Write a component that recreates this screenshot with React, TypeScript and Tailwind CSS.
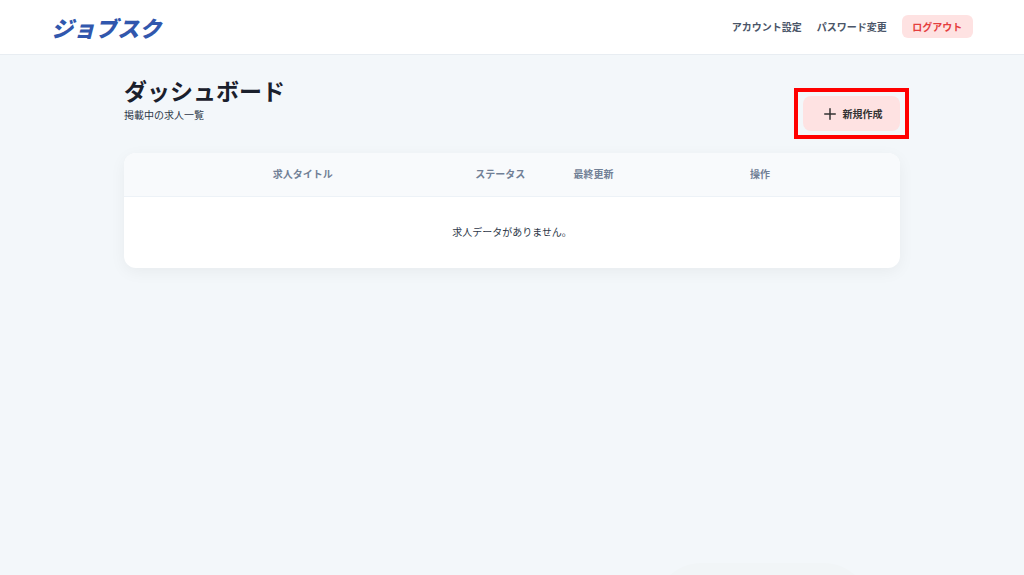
import React from "react";
import { Plus } from "lucide-react";

const Columns = [
  { Name: "求人タイトル", style: "w-[43%] pl-6" },
  { Name: "ステータス", style: "w-[11%]" },
  { Name: "最終更新", style: "w-[13%]" },
  { Name: "操作", style: "w-[33%] pr-6" },
];

const Header = () => {
  return (
    <header className="flex items-center justify-between h-[55px] px-[5%] bg-white border-b border-[#e8edf2]">
      <a
        href="#"
        className="text-[22px] leading-6 font-black italic text-[#3157ad] whitespace-nowrap"
      >
        ジョブスク
      </a>
      <nav className="flex items-center gap-[15px] pb-px text-[10px] leading-4 font-bold text-[#4a5568]">
        <a href="#">アカウント設定</a>
        <a href="#">パスワード変更</a>
        <button className="h-[23px] w-[71px] rounded-md bg-[#fee2e2] text-[#e53e3e] cursor-pointer">
          ログアウト
        </button>
      </nav>
    </header>
  );
};

const App = () => {
  return (
    <div
      className={`relative min-h-screen overflow-hidden bg-[#f3f7fa] font-["Noto_Sans_CJK_JP",sans-serif] text-[#2d3748]`}
    >
      <Header />
      <main className="relative mx-auto w-full max-w-[776px] pt-5">
        <div className="flex items-end justify-between">
          <div className="pb-2">
            <h1 className="text-[23px] leading-[30px] font-bold text-[#1a202c]">
              ダッシュボード
            </h1>
            <p className="mt-0.5 text-[10px] leading-4">掲載中の求人一覧</p>
          </div>
          <div className="relative">
            <button className="flex items-center justify-center gap-1 h-[35px] w-[97px] rounded-lg bg-[#fee2e2] text-[10px] font-bold text-[#333333] cursor-pointer">
              <Plus size={18} strokeWidth={2} />
              新規作成
            </button>
            {/* Highlight frame */}
            <div className="absolute -inset-x-[9px] -inset-y-2 border-4 border-[#ff0000] pointer-events-none"></div>
          </div>
        </div>

        {/* Job list */}
        <div className="mt-[22px] overflow-hidden rounded-xl bg-white shadow-[0_4px_16px_rgba(0,0,0,0.05)]">
          <table className="w-full table-fixed text-[10px] leading-4 text-center">
            <thead className="bg-[#f8fafc] text-[#718096]">
              <tr className="h-[43px] border-b border-[#edf2f7]">
                {Columns.map((item) => (
                  <th key={item.Name} className={`font-bold ${item.style}`}>
                    {item.Name}
                  </th>
                ))}
              </tr>
            </thead>
            <tbody>
              <tr className="h-[72px]">
                <td colSpan={4}>求人データがありません。</td>
              </tr>
            </tbody>
          </table>
        </div>
      </main>
      {/* Soft shape at the bottom edge */}
      <div className="absolute left-[64%] -bottom-20 h-[92px] w-[21%] rounded-[46px] bg-[#f1f5f7]"></div>
    </div>
  );
};

export default App;
